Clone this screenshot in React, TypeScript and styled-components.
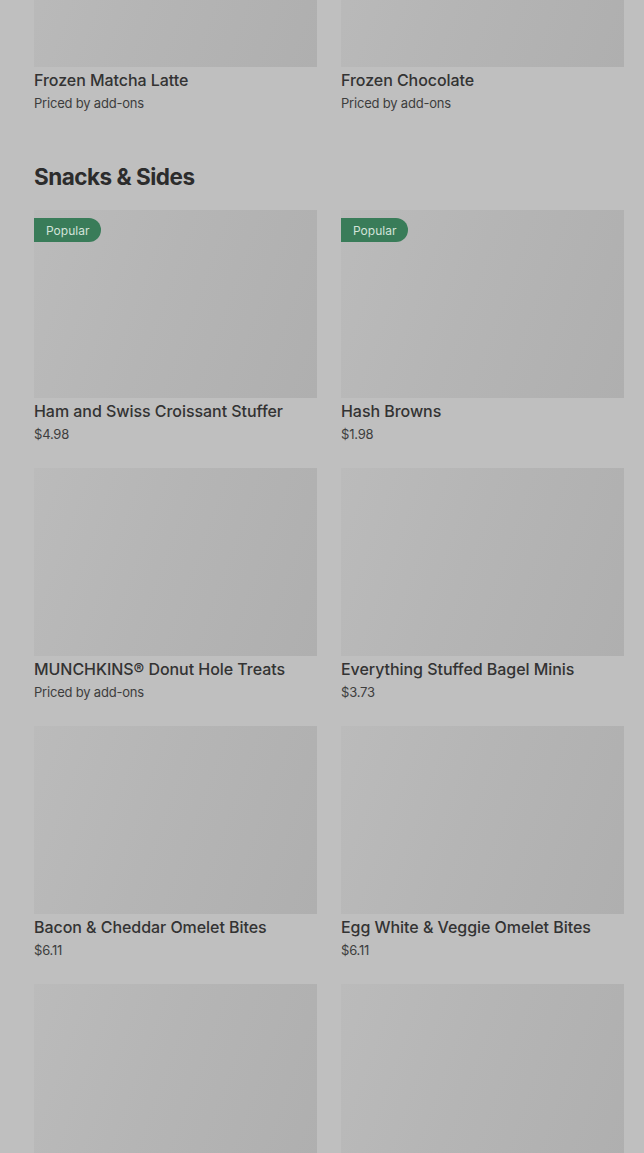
import styled, { createGlobalStyle } from 'styled-components';

const GlobalStyle = createGlobalStyle`
  html, body {
    margin: 0;
    padding: 0;
    background: #bfbfbf;
    overflow: hidden;
  }
  body {
    font-family: Inter, "Noto Sans", "Liberation Sans", sans-serif;
    color: #333333;
  }
`;

const Page = styled.div`
  width: 644px;
  height: 1153px;
  overflow: hidden;
  box-sizing: border-box;
  padding: 0 20px 0 34px;
`;

const Section = styled.section<{ $first?: boolean }>`
  margin-top: ${({ $first }) => ($first ? '-121px' : '50px')};
`;

const SectionTitle = styled.h2`
  margin: 0 0 18px;
  font-size: 22.5px;
  line-height: 30px;
  font-weight: 700;
  letter-spacing: -0.5px;
  color: #2c2c2c;
`;

const Grid = styled.div`
  display: grid;
  grid-template-columns: 283px 283px;
  column-gap: 24px;
  row-gap: 25px;
`;

const Card = styled.article`
  display: flex;
  flex-direction: column;
`;

const Thumb = styled.div`
  position: relative;
  height: 188px;
  background: linear-gradient(110deg, #bbbbbb 0%, #b5b5b5 45%, #afafaf 100%);
`;

const Badge = styled.span`
  position: absolute;
  top: 8px;
  left: 0;
  height: 24px;
  padding: 0 12px;
  display: flex;
  align-items: center;
  border-radius: 0 12px 12px 0;
  background: #397c59;
  color: #d3e3d9;
  font-size: 12px;
  font-weight: 400;
`;

const Name = styled.h3`
  margin: 2px 0 0;
  font-size: 16px;
  line-height: 22px;
  font-weight: 500;
  color: #333333;
  letter-spacing: -0.05px;
`;

const Price = styled.p`
  margin: 3px 0 0;
  font-size: 13px;
  line-height: 18px;
  font-weight: 400;
  color: #3d3d3d;
  letter-spacing: -0.2px;
`;

type Item = { id: string; name?: string; price?: string; popular?: boolean };

const drinks: Item[] = [
  { id: 'matcha', name: 'Frozen Matcha Latte', price: 'Priced by add-ons' },
  { id: 'choc', name: 'Frozen Chocolate', price: 'Priced by add-ons' },
];

// last row is scrolled past the bottom edge, only the pictures show
const snacks: Item[] = [
  { id: 'ham', name: 'Ham and Swiss Croissant Stuffer', price: '$4.98', popular: true },
  { id: 'hash', name: 'Hash Browns', price: '$1.98', popular: true },
  { id: 'munch', name: 'MUNCHKINS® Donut Hole Treats', price: 'Priced by add-ons' },
  { id: 'bagel', name: 'Everything Stuffed Bagel Minis', price: '$3.73' },
  { id: 'bacon', name: 'Bacon & Cheddar Omelet Bites', price: '$6.11' },
  { id: 'egg', name: 'Egg White & Veggie Omelet Bites', price: '$6.11' },
  { id: 'more-1' },
  { id: 'more-2' },
];

function ItemCard({ item }: { item: Item }) {
  return (
    <Card>
      <Thumb>{item.popular && <Badge>Popular</Badge>}</Thumb>
      {item.name && <Name>{item.name}</Name>}
      {item.price && <Price>{item.price}</Price>}
    </Card>
  );
}

export default function App() {
  return (
    <>
      <GlobalStyle />
      <Page>
        <Section $first>
          <Grid>
            {drinks.map((d) => (
              <ItemCard key={d.id} item={d} />
            ))}
          </Grid>
        </Section>
        <Section>
          <SectionTitle>Snacks &amp; Sides</SectionTitle>
          <Grid>
            {snacks.map((s) => (
              <ItemCard key={s.id} item={s} />
            ))}
          </Grid>
        </Section>
      </Page>
    </>
  );
}
